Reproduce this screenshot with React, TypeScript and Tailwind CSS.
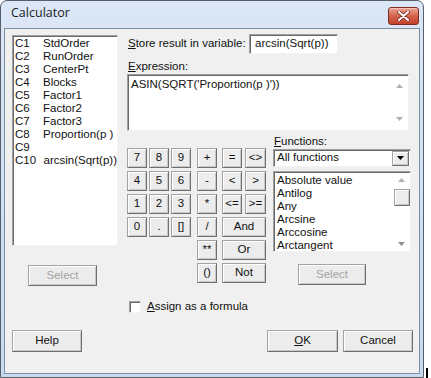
import type { ReactNode } from "react";

const COLUMNS: [string, string][] = [
  ["C1", "StdOrder"],
  ["C2", "RunOrder"],
  ["C3", "CenterPt"],
  ["C4", "Blocks"],
  ["C5", "Factor1"],
  ["C6", "Factor2"],
  ["C7", "Factor3"],
  ["C8", "Proportion(p )"],
  ["C9", ""],
  ["C10", "arcsin(Sqrt(p))"],
];

const FUNCTIONS = ["Absolute value", "Antilog", "Any", "Arcsine", "Arccosine", "Arctangent"];

// classic raised push button look, as in the Windows 7 "basic" dialogs
function Btn({ children, className = "", disabled = false }: { children: ReactNode; className?: string; disabled?: boolean }) {
  return (
    <div
      className={`flex items-center justify-center border border-[#a3a3a3] border-r-[#6f6f6f] border-b-[#6f6f6f] bg-[#ececec] shadow-[inset_1px_1px_0_#ffffff,inset_-1px_-1px_0_#c8c8c8] text-[11.5px] leading-none ${
        disabled ? "text-[#a3a3a3]" : "text-[#111]"
      } ${className}`}
    >
      {children}
    </div>
  );
}

// sunken field border
const sunken =
  "border border-[#a0a0a0] border-r-[#f2f2f2] border-b-[#f2f2f2] shadow-[inset_1px_1px_0_#6a6a6a] bg-white";

function Tri({ down = false, color = "#b0b0b0" }: { down?: boolean; color?: string }) {
  return (
    <svg width="7" height="4" viewBox="0 0 7 4">
      <path d={down ? "M0 0 H7 L3.5 4 Z" : "M0 4 H7 L3.5 0 Z"} fill={color} />
    </svg>
  );
}

export default function App() {
  const digits = ["7", "8", "9", "4", "5", "6", "1", "2", "3", "0", ".", "[]"];
  const ops = ["+", "-", "*", "/", "**", "()"];
  const rel = ["=", "<>", "<", ">", "<=", ">="];

  return (
    <div className="relative w-[431px] h-[378px] bg-white font-['Liberation_Sans',Arial,sans-serif] text-[11.5px] text-[#111] overflow-hidden">
      <div className="w-[424px] h-[378px] rounded-t-[7px] border border-[#56606c] bg-gradient-to-b from-[#dbe7f6] to-[#c8daf0] px-[3px] pb-[3px] flex flex-col">
        {/* title bar */}
        <div className="relative h-[27px] flex items-center pl-[7px] pb-[3px] shrink-0">
          <span className="text-[12.5px] text-[#1b1b1b] font-['Open_Sans',sans-serif]">Calculator</span>
          <div className="absolute right-[1px] top-[6px] w-[31px] h-[18px] rounded-[3px] border border-[#7c2c22] bg-gradient-to-b from-[#e9a593] via-[#d4634c] to-[#c2412a] flex items-center justify-center shadow-[inset_0_1px_0_#f5c4b5]">
            <svg width="13" height="10" viewBox="0 0 13 10">
              <path d="M2 1 L11 9 M11 1 L2 9" stroke="#7a2a20" strokeWidth="3.6" strokeLinecap="round" />
              <path d="M2 1 L11 9 M11 1 L2 9" stroke="#ffffff" strokeWidth="2" strokeLinecap="round" />
            </svg>
          </div>
        </div>

        {/* client area */}
        <div className="flex-1 border border-[#7d8ea3] bg-[#f0f0f0] pl-[7px] pt-[6px]">
          <div className="flex items-start">
            {/* column list */}
            <div className="w-[106px] flex flex-col">
              <div className={`${sunken} h-[211px] pt-[1px] pl-[2px]`}>
                {COLUMNS.map(([c, n]) => (
                  <div key={c} className="flex h-[13px] items-center leading-none">
                    <span className="w-[28px]">{c}</span>
                    <span className={c === "C10" ? "ml-[4px]" : ""}>{n}</span>
                  </div>
                ))}
              </div>
              <Btn disabled className="mt-[19px] ml-[16px] w-[69px] h-[21px]">
                Select
              </Btn>
            </div>

            {/* right side */}
            <div className="ml-[9px] flex flex-col">
              <div className="flex items-center h-[20px] -mt-[1px]">
                <span className="w-[122px] pl-[1px]">
                  <span className="underline">S</span>tore result in variable:
                </span>
                <div className={`${sunken} w-[89px] h-[20px] flex items-center pl-[5px]`}>arcsin(Sqrt(p))</div>
              </div>
              <div className="mt-[6px] h-[13px] leading-[13px] pl-[1px]">
                <span className="underline">E</span>xpression:
              </div>
              <div className={`${sunken} mt-[1px] w-[282px] h-[57px] flex`}>
                <div className="flex-1 pl-[3px] pt-[3px] leading-[13px]">ASIN(SQRT('Proportion(p )'))</div>
                <div className="w-[17px] flex flex-col items-center justify-between py-[9px]">
                  <Tri />
                  <Tri down />
                </div>
              </div>

              <div className="flex items-start mt-[4px]">
                {/* keypad */}
                <div className="flex mt-[13px]">
                  <div className="grid grid-cols-[20px_20px_20px] gap-x-[2px] gap-y-[3px] self-start">
                    {digits.map((d) => (
                      <Btn key={d} className="h-[20px]">
                        {d}
                      </Btn>
                    ))}
                  </div>
                  <div className="ml-[6px] flex flex-col gap-[3px]">
                    {ops.map((o) => (
                      <Btn key={o} className="w-[20px] h-[20px]">
                        {o}
                      </Btn>
                    ))}
                  </div>
                  <div className="ml-[5px] grid grid-cols-[20px_21px] gap-x-[3px] gap-y-[3px] self-start">
                    {rel.map((r) => (
                      <Btn key={r} className="h-[20px]">
                        {r}
                      </Btn>
                    ))}
                    {["And", "Or", "Not"].map((w) => (
                      <Btn key={w} className="col-span-2 h-[20px]">
                        {w}
                      </Btn>
                    ))}
                  </div>
                </div>

                {/* functions */}
                <div className="ml-[7px] flex flex-col w-[138px]">
                  <div className="h-[13px] leading-[13px] pl-[1px]">
                    <span className="underline">F</span>unctions:
                  </div>
                  <div className={`${sunken} mt-[1px] h-[18px] flex items-center`}>
                    <span className="flex-1 pl-[3px]">All functions</span>
                    <Btn className="w-[17px] h-[15px] mr-[1px]">
                      <Tri down color="#000" />
                    </Btn>
                  </div>
                  <div className={`${sunken} mt-[4px] h-[81px] flex`}>
                    <div className="flex-1 pl-[3px] pt-[2px]">
                      {FUNCTIONS.map((f) => (
                        <div key={f} className="h-[13px] leading-[13px]">
                          {f}
                        </div>
                      ))}
                    </div>
                    <div className="w-[17px] flex flex-col items-center pt-[6px] pb-[5px]">
                      <Tri />
                      <Btn className="mt-[7px] w-[16px] h-[17px]">{null}</Btn>
                      <div className="flex-1" />
                      <Tri down color="#909090" />
                    </div>
                  </div>
                  <Btn disabled className="mt-[12px] ml-[25px] w-[68px] h-[21px]">
                    Select
                  </Btn>
                </div>
              </div>
            </div>
          </div>

          {/* formula checkbox */}
          <div className="mt-[15px] ml-[117px] flex items-center h-[12px]">
            <div className={`${sunken} w-[12px] h-[12px]`} />
            <span className="ml-[6px]">
              <span className="underline">A</span>ssign as a formula
            </span>
          </div>

          {/* dialog buttons */}
          <div className="mt-[17px] flex">
            <Btn className="w-[70px] h-[22px]">Help</Btn>
            <Btn className="ml-[185px] w-[71px] h-[22px]">
              <span className="underline">O</span>K
            </Btn>
            <Btn className="ml-[5px] w-[70px] h-[22px]">Cancel</Btn>
          </div>
        </div>
      </div>
      <div className="absolute left-[426px] top-[368px] w-[2px] h-[10px] bg-black" />
    </div>
  );
}
